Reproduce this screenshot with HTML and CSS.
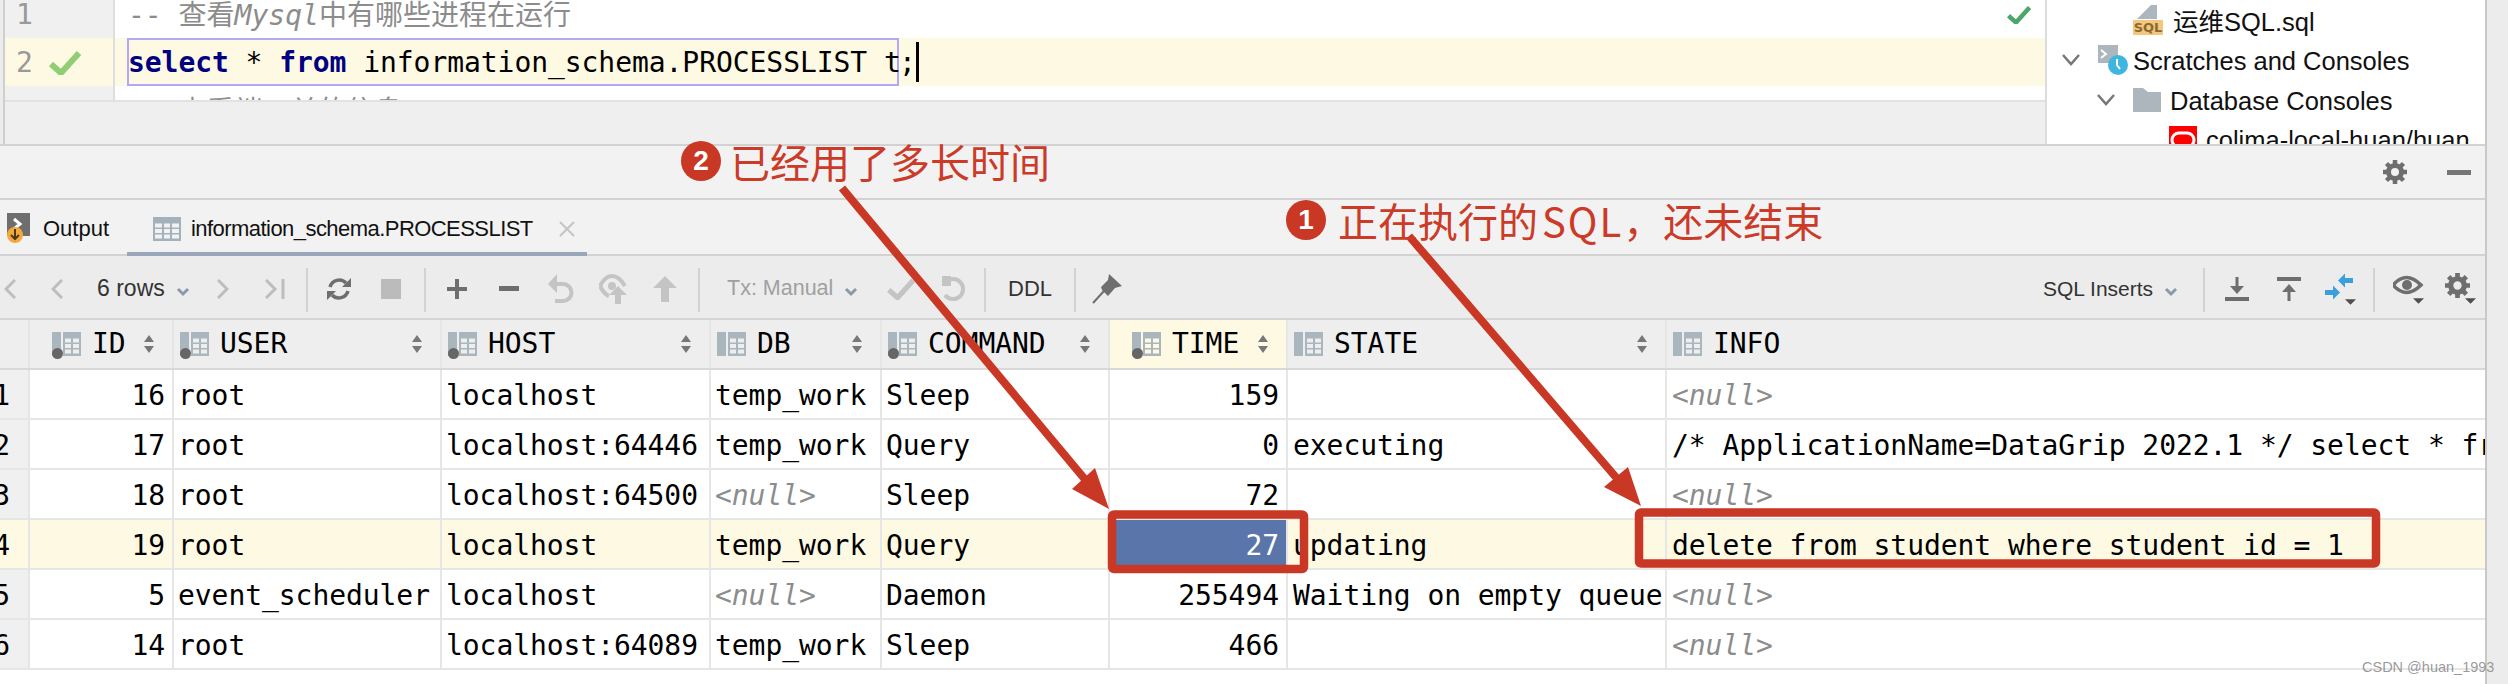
FILE: index.html
```html
<!DOCTYPE html>
<html lang="zh">
<head>
<meta charset="utf-8">
<title>DataGrip PROCESSLIST</title>
<link rel="stylesheet" href="styles.css">
</head>
<body>
<svg class="defs" width="0" height="0" aria-hidden="true">
  <symbol id="col" viewBox="0 0 29 24"><path d="M0 0h9v24H0z" fill="#a9b6bd"/><path d="M11 0h18v24H11zM13 6.500v4h6v-4zM21 6.500v4h6v-4zM13 12v4h6v-4zM21 12v4h6v-4zM13 17.500v4h6v-4zM21 17.500v4h6v-4z" fill="#a9b6bd" fill-rule="evenodd"/></symbol>
  <symbol id="sort" viewBox="0 0 10 18"><path d="M5 0l5 7H0zM5 18l-5-7h10z" fill="#777"/></symbol>
  <symbol id="gear" viewBox="0 0 24 24"><circle cx="12" cy="12" r="6.500" fill="none" stroke="#6e6e6e" stroke-width="5"/><path d="M12 0v5M12 19v5M0 12h5M19 12h5M3.500 3.500l3.500 3.500M17 17l3.500 3.500M3.500 20.500l3.500-3.500M17 7l3.500-3.500" stroke="#6e6e6e" stroke-width="4.500"/></symbol>
  <symbol id="drop" viewBox="0 0 16 16"><path d="M3 6l5 5 5-5" fill="none" stroke="#8a9aa8" stroke-width="3"/></symbol>
  <symbol id="undo" viewBox="0 0 26 30"><path d="M5 10h10a8.500 8.500 0 0 1 0 17H7" fill="none" stroke="#c4c4c4" stroke-width="4"/><path d="M9 0v19L0 10z" fill="#c4c4c4"/></symbol>
  <symbol id="tick" viewBox="0 0 32 24"><path d="M2 13l10 9L30 2" fill="none" stroke="currentColor" stroke-width="6"/></symbol>
  <symbol id="mini" viewBox="0 0 16 8"><path d="M0 0h16L8 8z" fill="#4f4f4f"/></symbol>
</svg>

<div class="app">
  <div class="main">
    <div class="top">
      <div class="stripe"></div>
      <div class="editor">
        <div class="code">
          <div class="line first"><div class="ln">1</div><div class="src comment">-- 查看<i>Mysql</i>中有哪些进程在运行</div></div>
          <div class="line active"><div class="ln">2<svg class="ok" width="32" height="24"><use href="#tick"/></svg></div><div class="src stmt"><span class="stmt-box"><b>select</b> * <b>from</b> information_schema.PROCESSLIST t</span><span>;</span><span class="caret"></span></div></div>
          <div class="line"><div class="ln"></div><div class="src comment">-- 查看端口关的信息</div></div>
          <svg class="file-ok" width="24" height="18" viewBox="0 0 32 24"><use href="#tick"/></svg>
        </div>
      </div>
      <aside class="tree">
        <div class="node d2">
          <svg class="ficon" width="30" height="30" viewBox="0 0 30 30"><path d="M4 14L18 0h6v14z" fill="#adb6bd"/><rect y="15" width="30" height="15" fill="#f5c77e"/><text x="15" y="27" class="sqltag">SQL</text></svg>
          <span>运维SQL.sql</span>
        </div>
        <div class="node d0">
          <svg class="chev" width="18" height="12" viewBox="0 0 18 12"><path d="M1 1l8 9 8-9" fill="none" stroke="#777" stroke-width="2.500"/></svg>
          <svg class="ficon scratch" width="32" height="30" viewBox="0 0 30 30"><path d="M0 0h20v18H0z" fill="#adb6bd"/><path d="M3 5l5 4-5 4" fill="none" stroke="#fff" stroke-width="2"/><circle cx="20" cy="20" r="10" fill="#3fb6e0"/><path d="M19 14v6l3 4" fill="none" stroke="#fff" stroke-width="2"/></svg>
          <span>Scratches and Consoles</span>
        </div>
        <div class="node d1">
          <svg class="chev" width="18" height="12" viewBox="0 0 18 12"><path d="M1 1l8 9 8-9" fill="none" stroke="#777" stroke-width="2.500"/></svg>
          <svg class="ficon" width="28" height="24" viewBox="0 0 28 24"><path d="M0 0h10l5 4h13v20H0z" fill="#adb6bd"/></svg>
          <span>Database Consoles</span>
        </div>
        <div class="node d3">
          <svg class="ficon" width="28" height="28" viewBox="0 0 28 28"><rect width="28" height="28" fill="#f00"/><rect x="3" y="7" width="22" height="14" rx="7" fill="none" stroke="#fff" stroke-width="3"/></svg>
          <span>colima-local-huan/huan</span>
        </div>
      </aside>
    </div>

    <div class="panel-head">
      <svg class="head-gear" width="24" height="26"><use href="#gear"/></svg>
      <span class="head-min"></span>
    </div>

    <div class="tabs">
      <div class="tab output">
        <svg width="26" height="32" viewBox="0 0 26 32"><rect x="1" width="23" height="23" fill="#6e6e6e"/><path d="M8 6l6 5-6 5" fill="none" stroke="#fff" stroke-width="3"/><circle cx="9" cy="22" r="8" fill="#f5a93b"/><path d="M9 16v10M5 22l4 4 4-4" fill="none" stroke="#4a3a1a" stroke-width="2"/></svg>
        <span>Output</span>
      </div>
      <div class="tab current">
        <svg width="28" height="24" viewBox="0 0 28 24"><path d="M0 0h28v24H0zM2 6.500v4h7v-4zM11 6.500v4h6v-4zM19 6.500v4h7v-4zM2 12v4h7v-4zM11 12v4h6v-4zM19 12v4h7v-4zM2 17.500v4h7v-4zM11 17.500v4h6v-4zM19 17.500v4h7v-4z" fill="#a3b1bd" fill-rule="evenodd"/></svg>
        <span class="tab-title">information_schema.PROCESSLIST</span>
        <svg class="close" width="16" height="16" viewBox="0 0 16 16"><path d="M1 1l14 14M15 1L1 15" stroke="#c4c4c4" stroke-width="2"/></svg>
      </div>
    </div>

    <div class="toolbar">
      <div class="group nav">
        <span class="btn b-first"><svg width="12" height="20" viewBox="0 0 12 20"><path d="M11 1L2 10l9 9" fill="none" stroke="#bdbdbd" stroke-width="3"/></svg></span>
        <span class="btn b-prev"><svg width="12" height="20" viewBox="0 0 12 20"><path d="M11 1L2 10l9 9" fill="none" stroke="#bdbdbd" stroke-width="3"/></svg></span>
        <span class="label rows">6 rows<svg class="dd" width="16" height="16"><use href="#drop"/></svg></span>
        <span class="btn"><svg width="12" height="20" viewBox="0 0 12 20"><path d="M1 1l9 9-9 9" fill="none" stroke="#bdbdbd" stroke-width="3"/></svg></span>
        <span class="btn"><svg width="20" height="20" viewBox="0 0 20 20"><path d="M1 1l9 9-9 9" fill="none" stroke="#bdbdbd" stroke-width="3"/><path d="M18 0v20" stroke="#bdbdbd" stroke-width="3"/></svg></span>
      </div>
      <i class="sep"></i>
      <div class="group">
        <span class="btn"><svg width="24" height="24" viewBox="0 0 24 24"><path d="M3 10a9.500 9.500 0 0 1 16-4M21 14a9.500 9.500 0 0 1-16 4" fill="none" stroke="#6e6e6e" stroke-width="3.500"/><path d="M24 1v9h-9zM0 23v-9h9z" fill="#6e6e6e"/></svg></span>
        <span class="btn"><i class="stop"></i></span>
      </div>
      <i class="sep"></i>
      <div class="group">
        <span class="btn"><svg width="20" height="20" viewBox="0 0 20 20"><path d="M10 0v20M0 10h20" stroke="#6e6e6e" stroke-width="4"/></svg></span>
        <span class="btn"><i class="minus"></i></span>
        <span class="btn"><svg width="26" height="30"><use href="#undo"/></svg></span>
        <span class="btn"><svg width="28" height="30" viewBox="0 0 28 30"><path d="M1 12Q6 2 13 2t13 10" fill="none" stroke="#c4c4c4" stroke-width="4"/><path d="M1 12q4 8 9 10" fill="none" stroke="#c4c4c4" stroke-width="4"/><circle cx="13" cy="12" r="4" fill="#c4c4c4"/><path d="M19 12l9 9h-6v9h-6v-9h-6z" fill="#c4c4c4"/></svg></span>
        <span class="btn"><svg width="24" height="26" viewBox="0 0 24 26"><path d="M12 0l12 12h-8v14H8V12H0z" fill="#c4c4c4"/></svg></span>
      </div>
      <i class="sep"></i>
      <div class="group tx">
        <span class="label muted">Tx: Manual<svg class="dd" width="16" height="16"><use href="#drop"/></svg></span>
        <span class="btn"><svg class="tick-off" width="28" height="22"><use href="#tick"/></svg></span>
        <span class="btn"><svg width="26" height="26" viewBox="0 0 26 26"><path d="M6 6a10 10 0 1 1-1 13" fill="none" stroke="#c4c4c4" stroke-width="4"/><path d="M2 0h9v10H2z" fill="#c4c4c4"/></svg></span>
      </div>
      <i class="sep"></i>
      <span class="label ddl">DDL</span>
      <i class="sep"></i>
      <span class="btn pin"><svg width="30" height="30" viewBox="0 0 30 30"><path d="M17 0l13 12-7 2-7 8-3-3-3-3-1-3 7-7z" fill="#6e6e6e"/><path d="M12 17L1 29" stroke="#6e6e6e" stroke-width="2"/></svg></span>
      <div class="group right">
        <span class="label sqlins">SQL Inserts<svg class="dd" width="16" height="16"><use href="#drop"/></svg></span>
        <i class="sep"></i>
        <div class="group transfer">
          <span class="btn"><svg width="24" height="24" viewBox="0 0 24 24"><path d="M0 20h24v4H0z" fill="#6e6e6e"/><path d="M10.500 0h3v9H19l-7 8-7-8h5.500z" fill="#6e6e6e"/></svg></span>
          <span class="btn"><svg width="24" height="24" viewBox="0 0 24 24"><path d="M0 0h24v4H0z" fill="#6e6e6e"/><path d="M12 7l7 8h-5.500v9h-3v-9H5z" fill="#6e6e6e"/></svg></span>
          <span class="btn"><svg width="32" height="32" viewBox="0 0 32 32"><path d="M20 5h8v5h-8zM13 7.500l7-7v14zM0 17h8v5H0zM15 19.500l-7-7v14z" fill="#3a9fdb"/><use href="#mini" x="20" y="26" width="11" height="6"/></svg></span>
        </div>
        <i class="sep"></i>
        <div class="group view">
          <span class="btn"><svg width="32" height="32" viewBox="0 0 32 32"><path d="M0 12Q13 -3 28 12 13 27 0 12z" fill="none" stroke="#6e6e6e" stroke-width="3.500"/><circle cx="14" cy="12" r="5" fill="#6e6e6e"/><use href="#mini" x="20" y="25" width="11" height="6"/></svg></span>
          <span class="btn gearbtn"><svg width="32" height="32" viewBox="0 0 32 32"><use href="#gear" width="25" height="25"/><use href="#mini" x="20" y="25" width="11" height="6"/></svg></span>
        </div>
      </div>
    </div>

    <div class="table">
      <div class="row head">
        <div class="corner"></div>
        <div class="th num"><svg class="cicon"><use href="#col"/></svg><i class="dot"></i><span>ID</span><svg class="sort"><use href="#sort"/></svg></div>
        <div class="th"><svg class="cicon"><use href="#col"/></svg><i class="dot"></i><span>USER</span><svg class="sort"><use href="#sort"/></svg></div>
        <div class="th"><svg class="cicon"><use href="#col"/></svg><i class="dot"></i><span>HOST</span><svg class="sort"><use href="#sort"/></svg></div>
        <div class="th"><svg class="cicon"><use href="#col"/></svg><span>DB</span><svg class="sort"><use href="#sort"/></svg></div>
        <div class="th"><svg class="cicon"><use href="#col"/></svg><i class="dot"></i><span>COMMAND</span><svg class="sort"><use href="#sort"/></svg></div>
        <div class="th num sel"><svg class="cicon"><use href="#col"/></svg><i class="dot"></i><span>TIME</span><svg class="sort"><use href="#sort"/></svg></div>
        <div class="th"><svg class="cicon"><use href="#col"/></svg><span>STATE</span><svg class="sort"><use href="#sort"/></svg></div>
        <div class="th"><svg class="cicon"><use href="#col"/></svg><span>INFO</span></div>
      </div>
      <div class="row"><div class="rn">1</div><div class="td r">16</div><div class="td">root</div><div class="td">localhost</div><div class="td">temp_work</div><div class="td">Sleep</div><div class="td r">159</div><div class="td wide"></div><div class="td wide nul">&lt;null&gt;</div></div>
      <div class="row"><div class="rn">2</div><div class="td r">17</div><div class="td">root</div><div class="td">localhost:64446</div><div class="td">temp_work</div><div class="td">Query</div><div class="td r">0</div><div class="td wide">executing</div><div class="td wide">/* ApplicationName=DataGrip 2022.1 */ select * from information_schema.PROCESSLIST t</div></div>
      <div class="row"><div class="rn">3</div><div class="td r">18</div><div class="td">root</div><div class="td">localhost:64500</div><div class="td nul">&lt;null&gt;</div><div class="td">Sleep</div><div class="td r">72</div><div class="td wide"></div><div class="td wide nul">&lt;null&gt;</div></div>
      <div class="row hl"><div class="rn">4</div><div class="td r">19</div><div class="td">root</div><div class="td">localhost</div><div class="td">temp_work</div><div class="td">Query</div><div class="td r picked">27</div><div class="td wide">updating</div><div class="td wide">delete from student where student_id = 1</div></div>
      <div class="row"><div class="rn">5</div><div class="td r">5</div><div class="td">event_scheduler</div><div class="td">localhost</div><div class="td nul">&lt;null&gt;</div><div class="td">Daemon</div><div class="td r">255494</div><div class="td wide">Waiting on empty queue</div><div class="td wide nul">&lt;null&gt;</div></div>
      <div class="row"><div class="rn">6</div><div class="td r">14</div><div class="td">root</div><div class="td">localhost:64089</div><div class="td">temp_work</div><div class="td">Sleep</div><div class="td r">466</div><div class="td wide"></div><div class="td wide nul">&lt;null&gt;</div></div>
    </div>
  </div>
  <div class="strip"></div>

  <svg class="marks" width="2508" height="684" viewBox="0 0 2508 684" aria-hidden="true">
    <path d="M842 188L1088 483" stroke="#c93725" stroke-width="8"/>
    <path d="M1109 509L1095 468 1072 489z" fill="#c93725"/>
    <path d="M1409 236L1620 482" stroke="#c93725" stroke-width="8"/>
    <path d="M1641 506L1628 467 1604 487z" fill="#c93725"/>
    <rect x="1112" y="514.500" width="192" height="54.500" rx="2" fill="none" stroke="#c93725" stroke-width="8.500"/>
    <rect x="1639" y="512.500" width="737" height="51" rx="2" fill="none" stroke="#c93725" stroke-width="8.500"/>
  </svg>
  <div class="note note-two"><b>2</b>已经用了多长时间</div>
  <div class="note note-one"><b>1</b>正在执行的<span class="note-sql">SQL</span>，还未结束</div>
  <div class="watermark">CSDN @huan_1993</div>
</div>
</body>
</html>
```
FILE: styles.css
```css
* { box-sizing: border-box; }
html, body { margin: 0; padding: 0; background: #fff; }
body { width: 2508px; height: 684px; overflow: hidden; font-family: "Liberation Sans", "Noto Sans CJK SC", sans-serif; color: #222; }
.defs { position: absolute; }
svg { flex: none; }
.app { position: relative; display: flex; width: 2508px; height: 684px; overflow: hidden; }
.main { width: 2485px; display: flex; flex-direction: column; }
.strip { flex: 1; background: #ececec; border-left: 2px solid #c8c8c8; }

.top { display: flex; height: 144px; background: #efefef; flex: none; }
.stripe { width: 5px; background: #ececec; border-right: 2px solid #cfcfcf; flex: none; }
.editor { flex: 1; min-width: 0; }
.code { position: relative; height: 102px; background: #fff; border-bottom: 2px solid #e2e2e2; overflow: hidden; font: 28px/48px "DejaVu Sans Mono", "Noto Sans CJK SC", monospace; }
.line { display: flex; height: 48px; }
.line.first { height: 38px; align-items: flex-start; }
.ln { width: 110px; height: 48px; flex: none; display: flex; align-items: center; gap: 16px; padding: 2px 0 0 11px; color: #999; background: #f0f0f0; border-right: 2px solid #dedede; }
.first .ln { margin-top: -10px; }
.line.first .src { margin-top: -10px; height: 48px; }
.src { flex: 1; padding: 2px 0 0 13px; white-space: nowrap; min-width: 0; }
.comment { color: #8c8c8c; padding-left: 13px; }
.line.active, .line.active .ln { background: #fef9e3; }
.ok { color: #8fce73; }
.stmt { display: flex; color: #000; padding-top: 0; letter-spacing: -0.06px; line-height: 50px; }
.stmt-box { display: block; height: 48px; margin-left: -1px; padding-left: 1px; width: 772px; background: #fef9e3; box-shadow: inset 0 0 0 2px #b4a7f5; }
.stmt-box b { color: #000080; }
.caret { width: 3px; height: 40px; margin: 4px 0 0 0; background: #000; }
.file-ok { position: absolute; right: 14px; top: 6px; color: #4fa66a; }

.tree { width: 440px; flex: none; background: #fff; border-left: 2px solid #dcdcdc; overflow: hidden; font-size: 25.500px; color: #111; }
.node { display: flex; align-items: center; height: 40px; white-space: nowrap; }
.node.d2 { padding-left: 86px; gap: 10px; }
.node.d2 span { padding-bottom: 2px; }
.node.d0 { padding-left: 15px; }
.node.d0 .chev { margin-right: 17px; }
.node.d0 span { margin-left: 4px; padding-top: 2px; }
.node.d1 { padding-left: 50px; }
.node.d1 .chev { margin-right: 18px; }
.node.d1 span { margin-left: 9px; padding-top: 2px; }
.node.d3 { padding-left: 122px; gap: 9px; height: 40px; align-items: flex-start; padding-top: 6px; }
.sqltag { font: bold 13px "DejaVu Sans", sans-serif; fill: #8a6a2f; text-anchor: middle; }

.panel-head { display: flex; align-items: center; justify-content: flex-end; height: 54px; flex: none; background: #f2f2f2; border-top: 2px solid #d2d2d2; }
.head-gear { margin-right: 40px; }
.head-min { width: 24px; height: 5px; background: #777; margin-right: 14px; }

.tabs { display: flex; height: 58px; flex: none; background: #f2f2f2; border-top: 2px solid #d2d2d2; border-bottom: 2px solid #d2d2d2; font-size: 22px; }
.tab { display: flex; align-items: center; color: #111; }
.tab.output { width: 127px; padding: 4px 0 0 6px; gap: 11px; }
.tab.current { width: 460px; padding: 6px 0 0 26px; gap: 10px; margin-bottom: -2px; border-bottom: 4px solid #9aa7ba; }
.tab-title { letter-spacing: -0.55px; }
.close { margin-left: 16px; }

.toolbar { display: flex; align-items: center; height: 64px; flex: none; padding-top: 3px; background: #ececec; border-bottom: 2px solid #d4d4d4; font-size: 23px; }
.group { display: flex; align-items: center; padding: 0 7px 0 5px; }
.group.nav { padding: 0 5px 0 0; }
.sep { width: 2px; height: 44px; margin-top: 3px; background: #d2d2d2; flex: none; }
.btn { width: 52px; height: 44px; display: flex; align-items: center; justify-content: center; flex: none; }
.b-first { width: 20px; }
.b-prev { width: 74px; }
.label { display: flex; align-items: center; white-space: nowrap; color: #333; }
.label .dd { margin: 4px 0 0 10px; }
.rows { width: 100px; margin-left: 3px; }
.muted { color: #a0a0a0; width: 130px; margin: 0 18px 0 27px; font-size: 21.500px; }
.tx { padding: 0 5px 0 0; }
.tick-off { color: #c4c4c4; }
.ddl { margin: 0 25px 0 22px; width: 41px; font-size: 22px; }
.pin { margin-left: 5px; }
.stop { width: 20px; height: 20px; background: #bbb; }
.minus { width: 20px; height: 5px; background: #6e6e6e; }
.group.right { margin-left: auto; padding: 0; }
.sqlins { width: 160px; font-size: 21px; }
.group.transfer { padding: 0 6px; }
.group.view { padding: 0 0 0 8px; }
.gearbtn { margin-right: -2px; }

.table { font: 28px/48px "DejaVu Sans Mono", "Noto Sans CJK SC", monospace; color: #000; letter-spacing: -0.06px; }
.row { display: grid; grid-template-columns: 28px 144px 268px 269px 171px 228px 178px 379px 820px; height: 50px; border-bottom: 2px solid #e6e6e6; }
.row.head { background: #eee; border-bottom-color: #d8d8d8; }
.corner { background: #eee; }
.rn { background: #f0f0f0; text-align: right; padding: 2px 18px 0 0; overflow: hidden; white-space: nowrap; direction: rtl; }
.th, .td { border-left: 2px solid #e6e6e6; white-space: nowrap; overflow: hidden; min-width: 0; }
.th { position: relative; display: flex; align-items: center; padding: 0 18px 0 6px; }
.th.num { padding-left: 22px; }
.th.sel { background: #fef9e3; }
.cicon { width: 29px; height: 24px; flex: none; margin-right: 11px; overflow: visible; }
.dot { position: absolute; left: 6px; bottom: 9px; width: 11px; height: 11px; border-radius: 50%; background: #666; }
.th.num .dot { left: 22px; }
.sort { width: 10px; height: 18px; margin-left: auto; flex: none; }
.td { padding: 2px 7px 0 4px; }
.td.wide { padding-left: 5px; }
.td.r { text-align: right; }
.nul { color: #8c8c8c; font-style: italic; }
.hl, .hl .rn { background: #fef9e3; }
.picked { background: #5a75aa; color: #fff; }

.marks { position: absolute; left: 0; top: 0; pointer-events: none; }
.note { position: absolute; display: flex; align-items: center; white-space: nowrap; font: 40px/48px "Noto Sans CJK SC", sans-serif; color: #cc3a28; }
.note b { display: flex; align-items: center; justify-content: center; width: 40px; height: 40px; border-radius: 50%; background: #c93725; color: #fff; font: bold 28px "Liberation Sans", sans-serif; margin-right: 9px; }
.note-two { left: 681px; top: 137px; }
.note-one { left: 1286px; top: 196px; }
.note-one b { margin-right: 12px; }
.note-sql { margin-left: 4px; letter-spacing: 2px; }
.watermark { position: absolute; left: 2362px; top: 659px; font: 14.500px "Liberation Sans", sans-serif; color: rgba(120,120,120,.75); }
```
